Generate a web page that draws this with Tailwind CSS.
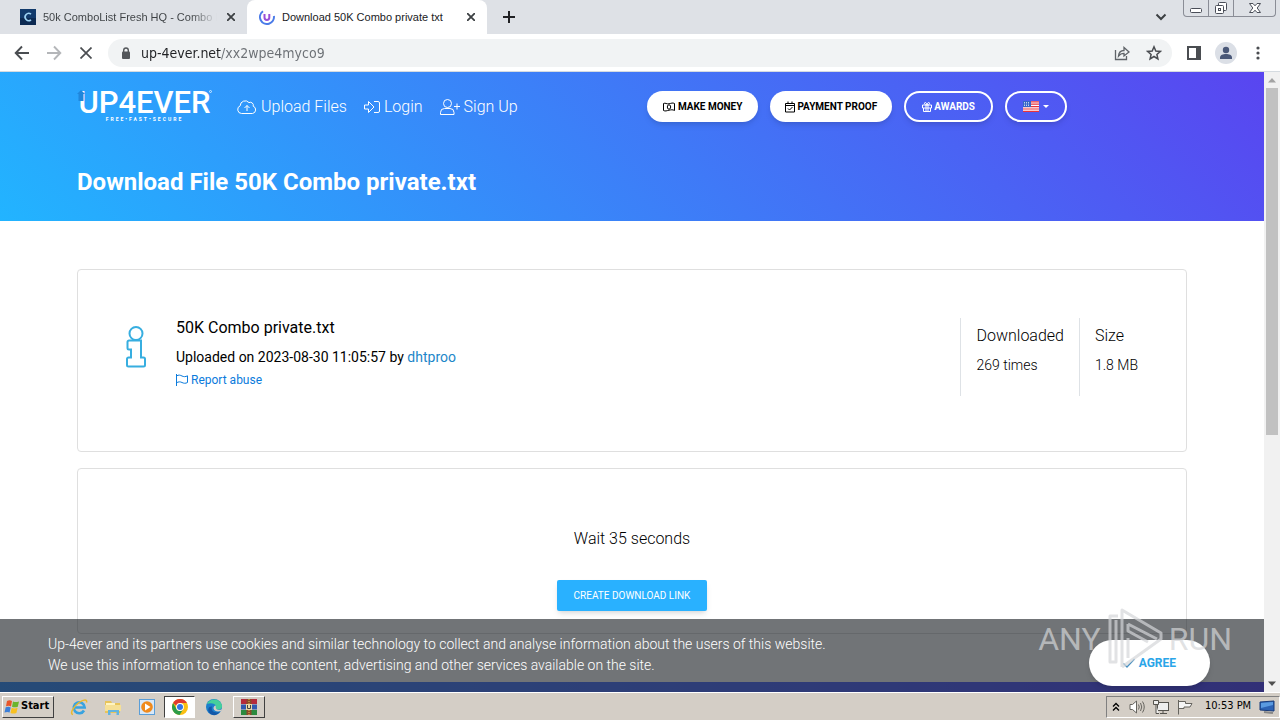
<!DOCTYPE html>
<html lang="en">
<head>
    <meta charset="UTF-8">
    <meta name="viewport" content="width=device-width, initial-scale=1.0">
    <title>Download 50K Combo private txt</title>
    <script src="https://cdn.jsdelivr.net/npm/@tailwindcss/browser@4"></script>
</head>
<body class="h-screen flex flex-col overflow-hidden bg-white font-['DejaVu_Sans_Condensed','DejaVu_Sans',sans-serif] text-[#202124]">

    <!-- Tab strip -->
    <div class="relative flex h-[34px] shrink-0 items-stretch bg-[#dee1e6] font-['Liberation_Sans',sans-serif] text-[11px]">
        <div class="flex w-[247px] items-center pl-5 pr-2">
            <svg class="size-4 shrink-0" viewBox="0 0 16 16"><rect width="16" height="16" fill="#123a6b"/><rect y="9" width="16" height="7" fill="#0c2a52"/><path d="M11 5.2A3.6 3.6 0 1 0 11 10.8" fill="none" stroke="#9fd4f5" stroke-width="1.6"/></svg>
            <span class="ml-[7px] w-[176px] overflow-hidden whitespace-nowrap bg-linear-to-r from-[#3c4043] from-85% to-transparent bg-clip-text text-transparent">50k ComboList Fresh HQ - Combo Lis</span>
            <button class="ml-1.5 flex size-4 items-center justify-center" aria-label="Close tab">
                <svg class="size-2" viewBox="0 0 8 8" stroke="#3c4043" stroke-width="1.8"><path d="M0 0l8 8M8 0L0 8"/></svg>
            </button>
        </div>
        <div class="flex w-60 items-center rounded-t-lg bg-white pl-3 pr-2">
            <svg class="size-4 shrink-0" viewBox="0 0 16 16" fill="none"><path d="M4 2.2A7 7 0 1 0 14.9 7" stroke="#4b7be8" stroke-width="2"/><path d="M5.5 5v3.500a2.300 2.300 0 0 0 4.800 0V5" stroke="#9a4fd8" stroke-width="2"/></svg>
            <span class="ml-[7px] flex-1 whitespace-nowrap">Download 50K Combo private txt</span>
            <button class="flex size-4 items-center justify-center" aria-label="Close tab">
                <svg class="size-2" viewBox="0 0 8 8" stroke="#3c4043" stroke-width="1.8"><path d="M0 0l8 8M8 0L0 8"/></svg>
            </button>
        </div>
        <button class="flex w-11 items-center justify-center" aria-label="New tab">
            <svg class="size-3" viewBox="0 0 12 12" stroke="#202124" stroke-width="2"><path d="M6 0v12M0 6h12"/></svg>
        </button>
        <button class="ml-auto mr-3 flex w-5 items-center justify-center" aria-label="Search tabs">
            <svg class="h-2 w-3" viewBox="0 0 12 8" fill="none" stroke="#3c4043" stroke-width="2"><path d="M1.500 1.500L6 6l4.500-4.500"/></svg>
        </button>
        <div class="mr-1 flex h-[17px] rounded-b border border-t-0 border-[#8a8d96]">
            <button class="flex w-[25px] items-center justify-center border-r border-[#8a8d96]" aria-label="Minimize">
                <svg class="h-4 w-4" viewBox="0 0 16 16" fill="#fff" stroke="#4a4e58"><rect x="2.500" y="8.500" width="11" height="4" rx="1"/></svg>
            </button>
            <button class="flex w-[25px] items-center justify-center border-r border-[#8a8d96]" aria-label="Restore">
                <svg class="h-4 w-4" viewBox="0 0 16 16" fill="#fff" stroke="#4a4e58"><rect x="5.500" y="2.500" width="8" height="8" rx="1"/><rect x="2.500" y="5.500" width="8" height="8" rx="1"/><rect x="5.500" y="8.500" width="2" height="2"/></svg>
            </button>
            <button class="flex w-[41px] items-center justify-center" aria-label="Close">
                <svg class="h-4 w-4" viewBox="0 0 16 16" fill="#fff" stroke="#4a4e58"><path d="M2.500 3.500h3.500l2 2.300 2-2.300h3.500L10.200 8l3.300 4.500H10L8 10.200 6 12.500H2.500L5.800 8z"/></svg>
            </button>
        </div>
    </div>

    <!-- Toolbar -->
    <div class="flex h-[38px] shrink-0 items-center border-b border-[#d5dbe0] pr-3.5">
        <button class="ml-[14px] flex size-4 items-center justify-center" aria-label="Back">
            <svg class="size-4" viewBox="0 0 16 16" fill="none" stroke="#4a4d51" stroke-width="1.900"><path d="M15 8H2M8 1.500L1.700 8 8 14.500"/></svg>
        </button>
        <button class="ml-4 flex size-4 items-center justify-center" aria-label="Forward">
            <svg class="size-4" viewBox="0 0 16 16" fill="none" stroke="#b4b6b9" stroke-width="1.900"><path d="M1 8h13M8 1.500L14.300 8 8 14.500"/></svg>
        </button>
        <button class="ml-4 flex size-4 items-center justify-center" aria-label="Stop">
            <svg class="size-3" viewBox="0 0 12 12" stroke="#4a4d51" stroke-width="1.700"><path d="M.5.5l11 11M11.500.5l-11 11"/></svg>
        </button>
        <div class="ml-[14px] flex h-7 flex-1 items-center rounded-full bg-[#f1f3f4] pl-3 pr-2.5">
            <svg class="h-3 w-3 shrink-0" viewBox="0 0 12 12"><rect x="2" y="4.500" width="8" height="7.500" rx="1" fill="#54575b"/><path d="M3.700 5V3.300a2.300 2.300 0 0 1 4.600 0V5" fill="none" stroke="#54575b" stroke-width="1.400"/></svg>
            <input type="text" aria-label="Address" value="up-4ever.net/xx2wpe4myco9" class="ml-[9px] flex-1 bg-[linear-gradient(90deg,#202124_80px,#6b6f74_80px)] bg-clip-text text-sm text-transparent outline-none">
            <button class="size-4" aria-label="Share">
                <svg class="size-4" viewBox="0 0 16 16" fill="none" stroke="#5f6368" stroke-width="1.300"><path d="M1.500 5v9.500h11V11"/><path d="M4.500 11c.3-3.600 2.300-5.500 5.500-5.500V2.500L15 7l-5 4V8.300c-2.300 0-4 .7-5.500 2.700z"/></svg>
            </button>
            <button class="ml-4 size-4" aria-label="Bookmark">
                <svg class="size-4" viewBox="0 0 16 16" fill="none" stroke="#4a4d51" stroke-width="1.500"><path d="M8 1.800l1.800 4.200 4.500.4-3.400 3 1 4.500L8 11.500l-3.900 2.400 1-4.500-3.400-3 4.500-.4z"/></svg>
            </button>
        </div>
        <button class="ml-3.5 size-4" aria-label="Side panel">
            <svg class="size-4" viewBox="0 0 16 16"><path d="M1 1h14v14H1zM3 3v10h7V3z" fill="#4a4d51" fill-rule="evenodd"/></svg>
        </button>
        <button class="ml-3 size-6" aria-label="Profile">
            <svg class="size-6" viewBox="0 0 24 24"><circle cx="12" cy="12" r="11" fill="#dbdfe6"/><circle cx="12" cy="9" r="3.200" fill="#4a5878"/><path d="M6 18v-1.500c0-2.500 3-3.500 6-3.500s6 1 6 3.500V18z" fill="#4a5878"/></svg>
        </button>
        <button class="ml-3 size-4" aria-label="Menu">
            <svg class="size-4" viewBox="0 0 16 16" fill="#4a4d51"><circle cx="8" cy="3" r="1.600"/><circle cx="8" cy="8" r="1.600"/><circle cx="8" cy="13" r="1.600"/></svg>
        </button>
    </div>

    <!-- Browser viewport -->
    <div class="flex min-h-0 flex-1">
        <div class="relative min-w-0 flex-1 overflow-hidden font-[Roboto,sans-serif]">

            <header class="bg-[linear-gradient(45deg,#22b4ff,#5945f0)] pb-[21px] pt-[19px] text-white">
                <div class="mx-auto max-w-[1110px]">
                    <nav class="flex h-[31px] items-center">
                        <a href="#" class="relative flex w-[135px] flex-col items-center" aria-label="UP4EVER">
                            <span class="text-[31px] leading-[26px] font-medium">UP4EVER</span>
                            <span class="text-[5px] leading-[7px] font-bold tracking-[2px]">FREE•FAST•SECURE</span>
                            <svg class="absolute left-0 top-0 h-3 w-2" viewBox="0 0 8 12"><path d="M4 0l4 4H6.500v7h-5V4H0z" fill="#1f86dc"/></svg>
                            <svg class="absolute right-0 top-0 size-[3px]" viewBox="0 0 3 3"><circle cx="1.500" cy="1.500" r="1" fill="none" stroke="#fff" stroke-width=".7"/></svg>
                        </a>
                        <div class="ml-[25px] flex gap-[17px] text-base font-light">
                            <a href="#" class="flex items-center gap-1">
                                <svg class="h-4 w-5" viewBox="0 0 20 16" fill="none" stroke="currentColor"><path d="M4.500 14.500a4 4 0 0 1-1.300-7.700A5 5 0 0 1 12 3.600a3 3 0 0 1 4.200 3.600 3.800 3.800 0 0 1-.7 7.300z"/><path d="M10 12V6.500M7.500 9L10 6.500 12.500 9"/></svg>
                                Upload Files
                            </a>
                            <a href="#" class="flex items-center gap-1">
                                <svg class="size-4" viewBox="0 0 16 16" fill="none" stroke="currentColor"><path d="M.5 6v4h4v3.500L10 8 4.500 2.500V6z"/><path d="M10 2.500h4a1.500 1.500 0 0 1 1.500 1.500v8a1.500 1.500 0 0 1-1.500 1.500h-4"/></svg>
                                Login
                            </a>
                            <a href="#" class="flex items-center gap-1">
                                <svg class="h-4 w-5" viewBox="0 0 20 16" fill="none" stroke="currentColor"><circle cx="7.500" cy="4.500" r="4"/><path d="M5 9.500h5a4 4 0 0 1 4 4v2H.5v-2a4 4 0 0 1 4-4zM17 4.500v6M14 7.500h6"/></svg>
                                Sign Up
                            </a>
                        </div>
                        <div class="ml-auto mr-[120px] flex gap-3 text-[10px] font-bold">
                            <button class="flex h-[31px] items-center gap-[3px] rounded-full bg-white px-4 text-black shadow-md">
                                <svg class="h-3 w-3" viewBox="0 0 12 12" fill="none" stroke="currentColor"><path d="M.5 2.500c2-1 3 .8 5.500.3s3.500-1.300 5.500-.3v7c-2-1-3-.8-5.500-.3s-3.500 1.300-5.500.3z"/><ellipse cx="6" cy="6" rx="1.700" ry="2.200"/></svg>
                                MAKE MONEY
                            </button>
                            <button class="flex h-[31px] items-center gap-[2px] rounded-full bg-white px-[15px] text-black shadow-md">
                                <svg class="h-3 w-[10px]" viewBox="0 0 10 12" fill="none" stroke="currentColor"><path d="M.5 2.500h9v8.500h-9zM.5 4.500h9M3 .5v2M7 .5v2M3 7.500l1.500 1.500L7.500 6"/></svg>
                                PAYMENT PROOF
                            </button>
                            <button class="flex h-[31px] items-center gap-[2px] rounded-full border-2 border-white px-4 shadow-md">
                                <svg class="size-[10px]" viewBox="0 0 10 10" fill="none" stroke="currentColor"><path d="M.5 3h9v3h-9zM1.500 6v3.500h7V6M4 3v6.500M6 3v6.500M5 3C2 3 2 .5 3.300.5S5 3 5 3s.4-2.500 1.700-2.500S8 3 5 3z"/></svg>
                                AWARDS
                            </button>
                            <button class="flex h-[31px] items-center gap-1 rounded-full border-2 border-white px-4 shadow-md" aria-label="Language">
                                <svg class="h-[11px] w-4" viewBox="0 0 16 11"><rect width="16" height="11" fill="#fff"/><path d="M0 .8h16M0 3.200h16M0 5.600h16M0 8h16M0 10.300h16" stroke="#e8323c" stroke-width="1.200"/><rect width="8" height="6" fill="#3565c8"/><path d="M1 1.500h6M1 3h6M1 4.500h6" stroke="#fff" stroke-width=".7" stroke-dasharray="1 1"/></svg>
                                <svg class="h-1 w-[6px]" viewBox="0 0 6 4"><path d="M0 0h6L3 3z" fill="#fff"/></svg>
                            </button>
                        </div>
                    </nav>
                    <h1 class="mt-[42px] text-2xl leading-9 font-bold">Download File 50K Combo private.txt</h1>
                </div>
            </header>

            <main class="mx-auto flex max-w-[1110px] flex-col gap-4 py-12 text-black">
                <!-- File info -->
                <section class="flex min-h-[183px] items-start rounded border border-[#dfdfdf] p-12">
                    <svg class="mt-2 h-[42px] w-5" viewBox="0 0 20 42" fill="none" stroke="#37aee0" stroke-width="2"><circle cx="10" cy="7.500" r="6.500"/><path d="M3 14.500h12v17h2.500a1.500 1.500 0 0 1 1.500 1.500v6a1.500 1.500 0 0 1-1.500 1.500h-15A1.500 1.500 0 0 1 1 39v-6a1.500 1.500 0 0 1 1.500-1.500H5v-8H3A1.500 1.500 0 0 1 1.500 22v-6A1.500 1.500 0 0 1 3 14.500z"/></svg>
                    <div class="ml-[30px] flex-1">
                        <h2 class="text-base leading-5">50K Combo private.txt</h2>
                        <p class="mt-2 text-sm leading-[23px]">Uploaded on 2023-08-30 11:05:57 by <a href="#" class="text-[#1c87c9]">dhtproo</a></p>
                        <a href="#" class="flex items-center gap-[3px] text-xs leading-[22px] text-[#0b7bdc]">
                            <svg class="size-3" viewBox="0 0 12 12" fill="none" stroke="currentColor"><path d="M.5 0v12M.5 2c2-1.500 4-.8 5.500 0s3.500 1 5.500-.2v6.700c-2 1.200-4 .8-5.500 0s-3.500-1-5.500.3"/></svg>
                            Report abuse
                        </a>
                    </div>
                    <dl class="flex">
                        <div class="h-[78px] border-l border-[#dee2e6] px-[15px] pt-1.5">
                            <dt class="text-base font-light">Downloaded</dt>
                            <dd class="mt-[7px] text-sm leading-5 font-light">269 times</dd>
                        </div>
                        <div class="h-[78px] border-l border-[#dee2e6] pl-[15px] pt-1.5">
                            <dt class="text-base font-light">Size</dt>
                            <dd class="mt-[7px] text-sm leading-5 font-light">1.8 MB</dd>
                        </div>
                    </dl>
                </section>

                <!-- Countdown -->
                <section class="flex flex-col items-center rounded border border-[#dfdfdf] pb-[22px] pt-[58px]">
                    <p class="text-base font-light">Wait 35 seconds</p>
                    <button class="mt-[29px] h-[31px] rounded-xs bg-[#29b1ff] px-[17px] text-[10px] text-white shadow-md">CREATE DOWNLOAD LINK</button>
                </section>
            </main>

            <footer class="h-40 bg-linear-to-r from-[#338fff] to-[#5446ff]"></footer>

            <!-- Cookie notice -->
            <div class="absolute inset-x-0 bottom-0 flex items-start justify-between bg-[#1e2328]/63 pl-12 pr-[54px]">
                <p class="mt-[15px] text-sm leading-[21px] font-light text-white">
                    Up-4ever and its partners use cookies and similar technology to collect and analyse information about the users of this website.<br>
                    We use this information to enhance the content, advertising and other services available on the site.
                </p>
                <button class="mb-1.5 mt-[21px] flex h-[46px] items-center gap-1 rounded-full bg-white px-[34px] text-xs font-bold text-[#2aa5e8] shadow-md">
                    <svg class="size-3" viewBox="0 0 12 12" fill="none" stroke="#4a90c0" stroke-width="1.300"><path d="M.5 6.500L4 10l7.500-8"/></svg>
                    AGREE
                </button>
            </div>
        </div>

        <!-- Scrollbar -->
        <div class="flex w-4 shrink-0 flex-col items-center bg-[#f1f1f1]">
            <svg class="h-4 w-4 shrink-0" viewBox="0 0 16 16"><path d="M4 10.500h8L8 6z" fill="#a3a3a3"/></svg>
            <div class="h-[56%] w-3 bg-[#c1c1c1]"></div>
            <svg class="mt-auto h-4 w-4 shrink-0" viewBox="0 0 16 16"><path d="M4 5.500h8L8 10z" fill="#505050"/></svg>
        </div>
    </div>

    <!-- Watermark -->
    <div class="pointer-events-none absolute bottom-12 right-12 flex items-center gap-1 font-[Roboto,sans-serif] text-[32px] text-[#d4d6d8]/70">
        <span>ANY</span>
        <svg class="h-[66px] w-[60px]" viewBox="0 0 60 66" fill="none" stroke="currentColor" stroke-width="3" stroke-linejoin="round"><path d="M13 10H5v46h6V14M17 61V4l39 23v6L17 61M23 18l29 15M23 18v7l20 11M23 52V32"/></svg>
        <span>RUN</span>
    </div>

    <!-- Taskbar -->
    <div class="flex h-7 shrink-0 items-center border-t border-[#fff] bg-[#d4cec6] text-[11px] text-black">
        <button class="ml-0.5 flex h-[22px] items-center gap-px border border-[#404040] border-l-white border-t-white pl-px pr-1 font-bold">
            <svg class="size-4" viewBox="0 0 16 16"><path d="M3 2c2-1 3.500-.8 5 0L7 7.500C5.500 6.500 4 6.500 2 7.300z" fill="#e8562a"/><path d="M9 2.400c2 1 3.500.8 6 0l-1.200 5.300c-2 .8-4 .8-5.800 0z" fill="#6cb52d"/><path d="M1.700 8.300c2-.8 3.500-.8 5 .1L5.600 13.500C4 12.700 2.500 12.700.5 13.600z" fill="#3c7fd8"/><path d="M7.700 8.700c2 1 3.800.8 5.900.1L12.400 14c-2 .8-4 .8-5.900-.1z" fill="#f8c020"/></svg>
            Start
        </button>
        <button class="ml-4 size-[18px]" aria-label="Internet Explorer">
            <svg class="size-[18px]" viewBox="0 0 18 18" fill="none"><path d="M14 12.500a5.500 5.500 0 1 1 .7-3H5" stroke="#38a3e0" stroke-width="2.600"/><path d="M3 16.500C-1 16 4 8 9 4.500s8.500-3.500 7.500 0" stroke="#eab92e" stroke-width="1.500"/></svg>
        </button>
        <button class="ml-4 size-[18px]" aria-label="Explorer">
            <svg class="size-[18px]" viewBox="0 0 18 18"><path d="M1 3h6l1 2h8v10H1z" fill="#e8c45a"/><path d="M2 5h9v6H2z" fill="#fff4c0"/><path d="M1 7h16v6H1z" fill="#f6e096"/><path d="M4 17v-5h11v5h-2.500v-3h-6v3z" fill="#62b4e0"/></svg>
        </button>
        <button class="ml-4 size-[18px]" aria-label="Media Player">
            <svg class="size-[18px]" viewBox="0 0 18 18"><rect x="1.500" y="1.500" width="15" height="15" fill="#d8e8f8" stroke="#5a9ed8"/><circle cx="9" cy="9" r="5.800" fill="#f08a1c"/><path d="M7 5.500v7L12.500 9z" fill="#fff"/></svg>
        </button>
        <button class="ml-2 flex h-[22px] w-[31px] items-center justify-center border border-[#404040] border-b-white border-r-white bg-white" aria-label="Chrome">
            <svg class="size-4" viewBox="0 0 16 16"><circle cx="8" cy="8" r="8" fill="#fbbf12"/><path d="M1.070 4a8 8 0 0 1 13.860 0H8a4 4 0 0 0-3.700 2.500z" fill="#df3b2f"/><path d="M1.070 4a8 8 0 0 0 6.500 12l3.600-5.700A4 4 0 0 1 4.500 10z" fill="#2b9d4a"/><circle cx="8" cy="8" r="3.900" fill="#fff"/><circle cx="8" cy="8" r="3" fill="#3474e6"/></svg>
        </button>
        <button class="ml-2.5 size-[18px]" aria-label="Edge">
            <svg class="size-[18px]" viewBox="0 0 18 18"><circle cx="9" cy="9" r="8" fill="#1c7fcc"/><path d="M2 6C4 0 15-.5 17 7.500c.5 3-2 4.500-5 4-2-.3-1-1.500-1-3C10.500 5 5 4.500 2 6z" fill="#45cf9c"/><path d="M7 8.500c-1.500 4 2 7 7.500 5.500C12 18 7 18 4.500 15S3.500 8 7 8.500z" fill="#1358a8"/><path d="M10.500 7.500c1 1-.5 3 1.500 4 2 .8 4 .3 5-.5l-1 2c-3 1-7 .5-7.500-2.500-.2-1.500 1-3 2-3z" fill="#d4cec6"/></svg>
        </button>
        <button class="ml-2.5 flex h-[22px] w-8 items-center justify-center border border-[#404040] border-l-white border-t-white" aria-label="WinRAR">
            <svg class="size-4" viewBox="0 0 16 16"><path d="M0 0h16v5H0z" fill="#b52a3c"/><path d="M0 5.500h16v5H0z" fill="#3159b0"/><path d="M0 11h16v5H0z" fill="#2b8a3e"/><path d="M5.500 0h5v16h-5z" fill="#8b4a2a"/><path d="M5 5h6v6H5z" fill="#e8d8a8"/><path d="M6.500 6v3.500h3V6" fill="none" stroke="#444"/><path d="M8 0v5M8 11v5" stroke="#e8c050" stroke-dasharray="1 1"/></svg>
        </button>
        <div class="ml-auto flex h-[22px] items-center border border-[#808080] border-b-white border-r-white pl-1 pr-1">
            <svg class="size-2.5" viewBox="0 0 10 10" fill="none" stroke="#000" stroke-width="1.300"><path d="M2 4.500L5 1.500l3 3M2 8.500l3-3 3 3"/></svg>
            <svg class="ml-2 size-4" viewBox="0 0 16 16" fill="#fff" stroke="#66645f"><path d="M1 5.500h2.500L7.500 2v12l-4-3.500H1z"/><path d="M9.500 5.500q1.500 2.500 0 5M11.500 4q2.500 4 0 8M13.500 2.500q3.500 5.500 0 11" fill="none"/></svg>
            <svg class="ml-2 size-4" viewBox="0 0 16 16" fill="#eee" stroke="#55534e"><rect x="4.500" y="3.500" width="11" height="8"/><path d="M7 14.500h7M10 11.500v3"/><path d="M.5 1.500h5v4h-5zM3 5.500v9h3" /></svg>
            <svg class="ml-2 size-4" viewBox="0 0 16 16" fill="#f5f5f5" stroke="#66645f"><path d="M1.500 1v14.500M1.500 2.500h7v2h6.500l-2 3.500h-6V9.500H1.500z"/></svg>
            <time class="ml-3 w-[50px] whitespace-nowrap">10:53 PM</time>
            <svg class="ml-1 size-4" viewBox="0 0 16 16"><path d="M1 3l14-1v10L1 11z" fill="#2c62b4" stroke="#173a78"/><path d="M2 4l12-1v3L2 9z" fill="#5a9ae0"/><path d="M5 13l9 1" stroke="#888" stroke-width="2"/></svg>
        </div>
    </div>

</body>
</html>
